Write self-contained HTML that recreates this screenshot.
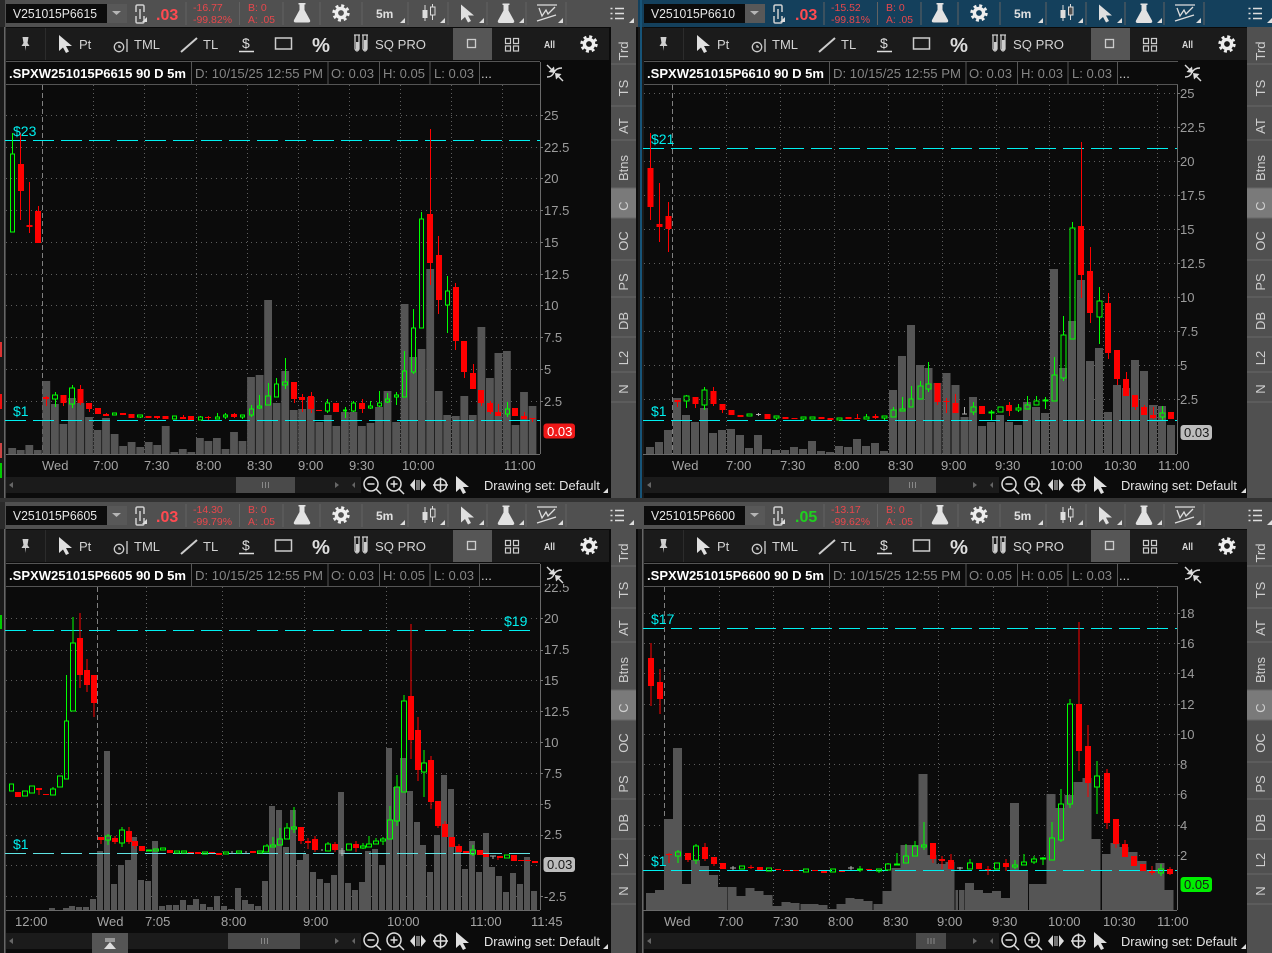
<!DOCTYPE html>
<html><head><meta charset="utf-8"><title>Charts</title>
<style>
html,body{margin:0;padding:0;background:#333;width:1272px;height:953px;overflow:hidden}
svg{display:block}
text{font-family:"Liberation Sans",Arial,sans-serif;font-size:13px}
.a{fill:#9c9c9c}
.t{fill:#a4a4a4}
.w{fill:#d2d2d2}
.h{fill:#858585}
.b{fill:#fff;font-weight:bold;font-size:12.5px}
.c{fill:#00eeee;font-size:14px}
.r{fill:#e8474c;font-size:10.5px}
.g{fill:#4fdc4f;font-size:10.5px}
.s{fill:#cfcfcf;text-anchor:middle}
.gx{stroke:#5e5e5e;stroke-width:1;stroke-dasharray:1 3;fill:none}
.gy{stroke:#5e5e5e;stroke-width:1;stroke-dasharray:1 4;fill:none}
.ds{stroke:#808080;stroke-width:1;stroke-dasharray:5 3;fill:none}
.cy{stroke:#00f0f0;stroke-width:1;stroke-dasharray:21 7;fill:none}
.ax{stroke:#6a6a6a;stroke-width:1;fill:none}
.ti{stroke:#777;stroke-width:1;fill:none}
.rw{stroke:#f00;stroke-width:1;fill:none}
.rb{stroke:#f00;stroke-width:6;fill:none}
.gw{stroke:#0f0;stroke-width:1;fill:none}
.gb{stroke:#0f0;stroke-width:1;fill:none}
.ww{stroke:#b0b0b0;stroke-width:1;fill:none}
.v{stroke:#555;fill:none}
</style></head><body>
<svg width="1272" height="953" viewBox="0 0 1272 953" xmlns="http://www.w3.org/2000/svg">
<defs>
<g id="gear"><circle r="4.6" fill="none" stroke="#eee" stroke-width="3.4"/><circle r="7.2" fill="none" stroke="#eee" stroke-width="3" stroke-dasharray="2.9 2.75"/></g>
<path id="flask" d="M-3.5 0h7v1.5h-1v5.500l5.500 10q1 2.500-2 2.500h-12q-3 0-2-2.500l5.500-10v-5.500h-1z" fill="#e2e2e2"/>
<path id="tri" d="M0 0h-5l5-5z" fill="#ddd"/>
<path id="cur" d="M0 0V16L4 12.500L7 18L10 16.500L7 11H13z" fill="#e0e0e0"/>
<g id="top">
<rect x="6" y="4" width="121" height="19" fill="#0c0c0c"/>
<rect x="107" y="4" width="20" height="19" fill="#585858"/>
<path d="M112 11h9l-4.500 4z" fill="#b5b5b5"/>
<path d="M136 12V6.500q0-1.500 1.500-1.500h5q1.500 0 1.500 1.500V12M136 16v5.500q0 1.500 1.500 1.500h5q1.500 0 1.500-1.500V16M140 9v10" fill="none" stroke="#cfcfcf" stroke-width="1.500"/>
<use href="#tri" x="147" y="22"/>
<path d="M186 2v23M239.500 2v23M283 2v23M320 2v23M362 2v23M408 2v23M448 2v23M487 2v23M526 2v23M566 2v23" stroke="#626262"/>
<use href="#flask" x="302" y="3"/>
<use href="#gear" x="341" y="13"/>
<use href="#tri" x="405" y="23"/>
<path d="M425 5v16M432.500 4v16" stroke="#ddd"/><rect x="422.500" y="10" width="5" height="8" fill="#ddd"/><rect x="430.500" y="7" width="4.500" height="8" fill="#505050" stroke="#ddd"/>
<use href="#tri" x="445" y="23"/>
<use href="#cur" x="461" y="4.500"/>
<use href="#tri" x="484" y="23"/>
<use href="#flask" x="506" y="3.500"/>
<use href="#tri" x="524" y="23"/>
<path d="M537 5h20M539 8l3 8 4-6 2 4 7-7M537 21l19-6" fill="none" stroke="#ddd" stroke-width="1.300"/>
<use href="#tri" x="563" y="23"/>
<path d="M615 8.500h9M615 13.500h9M615 18.500h9M610.500 8.500h2M610.500 13.500h2M610.500 18.500h2" stroke="#ddd" stroke-width="1.500"/>
<use href="#tri" x="634" y="23"/>
</g>
<g id="row">
<rect x="6" y="28" width="603" height="32" fill="#1b1b1b"/>
<rect x="453" y="28" width="39" height="32" fill="#565656"/>
<path d="M45.500 28v32" stroke="#2c2c2c"/>
<path d="M22.500 37h6l-1 6 2 3h-3.500l-.500 5-.500-5h-3.500l2-3z" fill="#cfcfcf"/>
<use href="#cur" x="59" y="35"/>
<circle cx="119" cy="47" r="4.700" fill="none" stroke="#ccc" stroke-width="1.300"/><path d="M119 45v2h2M127 39v13" fill="none" stroke="#ccc" stroke-width="1.300"/>
<path d="M181 52L197 38" stroke="#ccc" stroke-width="2"/>
<path d="M239 51.500h15" stroke="#ddd" stroke-width="1.500"/>
<rect x="275.500" y="38" width="16" height="11" fill="none" stroke="#ccc" stroke-width="1.500"/>
<path d="M354 35h6M362 35h6M355 35v14q2 4 4 0V35M363 35v14q2 4 4 0V35" fill="none" stroke="#ccc" stroke-width="1.300"/><rect x="356" y="42" width="2.500" height="8" fill="#ccc"/><rect x="364" y="40" width="2.500" height="10" fill="#ccc"/>
<rect x="467.500" y="39.500" width="8" height="8" fill="none" stroke="#ccc" stroke-width="1.300"/>
<path d="M505.500 38.500h5v5h-5zM513.500 38.500h5v5h-5zM505.500 46h5v5h-5zM513.500 46h5v5h-5z" fill="none" stroke="#ccc" stroke-width="1.200"/>
<use href="#gear" x="589" y="44"/>
</g>
<g id="hdr">
<path d="M6 61.500h534M6 84.500h534M191.500 62v22M328 62v22M379.500 62v22M430 62v22M479.500 62v22" stroke="#555"/>
<path d="M547 77q5 0 7-4.500t8-4.500" fill="none" stroke="#ddd" stroke-width="1.400"/>
<path d="M547 65l4.500 4.500" stroke="#ddd" stroke-width="1.400"/><path d="M555 73l-1-6.500-5.500 5.500z" fill="#ddd"/>
<path d="M563 81l-4.500-4.500" stroke="#ddd" stroke-width="1.400"/><path d="M555 73l1 6.500 5.500-5.500z" fill="#ddd"/>
</g>
<g id="side">
<rect x="611" y="27" width="25" height="424" fill="#505050"/>
<rect x="611" y="188" width="25" height="30" fill="#7a7a7a"/>
<path d="M611 64h25M611 106h25M611 140h25M611 188h25M611 218h25M611 260h25M611 297h25M611 337h25M611 372h25M611 402h25" stroke="#676767"/>
</g>
<g id="bot">
<rect x="6" y="477" width="355" height="16" fill="#1b1b1b"/>
<path d="M13 482v6l-4-3zM335 482v6l4-3zM355 482l-3 3 3 3z" fill="#666"/>
<g fill="none" stroke="#ddd" stroke-width="1.500"><circle cx="371" cy="484" r="7"/><path d="M376 489l5 5M367.500 484h7"/><circle cx="394" cy="484" r="7"/><path d="M399 489l5 5M390.500 484h7M394 480.500v7"/><circle cx="440.500" cy="485" r="6"/><path d="M433 485h15M440.500 477.500v15"/></g>
<path d="M415 479v12l-5-6zM421 479v12l5-6z" fill="#ddd"/><path d="M417 480v10M419 480v10" stroke="#ddd"/>
<use href="#cur" x="456" y="476"/>
<use href="#tri" x="608" y="493"/>
</g>
<path id="th" d="M-3 -3v6M0 -3v6M3 -3v6" stroke="#888" fill="none"/>
</defs>

<!-- TL panel -->
<rect x="0" y="0" width="638" height="498" fill="#0b0b0b"/>
<rect x="5" y="0" width="633" height="27" fill="#505050"/>
<rect x="0" y="0" width="5" height="27" fill="#2a2a2a"/>
<rect x="0" y="27" width="6" height="471" fill="#1a1a1a"/>
<rect x="4" y="27" width="1.500" height="471" fill="#666"/>
<rect x="0" y="342" width="2" height="15" fill="#d33"/><rect x="0" y="394" width="2" height="15" fill="#e11"/><rect x="0" y="443" width="2" height="15" fill="#c44"/><rect x="0" y="463" width="2" height="15" fill="#0c0"/>
<use href="#top"/><use href="#row"/><use href="#side"/><rect x="611" y="451" width="25" height="47" fill="#505050"/>
<path class="gy" d="M6 115.500H540M6 147.500H540M6 178.500H540M6 210.500H540M6 242.500H540M6 274.500H540M6 305.500H540M6 337.500H540M6 369.500H540M6 401.500H540"/>
<path class="gx" d="M93.500 85V454M144.500 85V454M196.500 85V454M247.500 85V454M298.500 85V454M349.500 85V454M400.500 85V454M451.500 85V454M502.500 85V454"/>
<path class="ds" d="M42.500 85V454"/>
<path class="v" stroke-width="7.800" d="M12.200 454V448M20.700 454V450M29.300 454V445M37.800 454V450M46.300 454V381M54.900 454V404M63.400 454V424M71.900 454V398M80.400 454V403M89 454V417M97.500 454V430M106 454V418M114.600 454V434M123.100 454V446M131.600 454V442M140.200 454V447M148.700 454V442M157.200 454V445M165.700 454V426M174.300 454V452M182.800 454V449M191.300 454V452M199.900 454V438M208.400 454V441M216.900 454V438M225.500 454V449M234 454V432M242.500 454V441M251 454V377M259.600 454V375M268.100 454V300M276.600 454V403M285.200 454V371M293.700 454V410M302.200 454V409M310.800 454V397M319.300 454V422M327.800 454V415M336.300 454V426M344.900 454V412M353.400 454V412M361.900 454V426M370.500 454V423M379 454V407M387.500 454V391M396.100 454V422M404.600 454V304M413.100 454V357M421.600 454V349M430.200 454V269M438.700 454V391M447.200 454V415M455.800 454V416M464.300 454V396M472.800 454V415M481.400 454V327M489.900 454V378M498.400 454V353M506.900 454V351M515.500 454V425M524 454V392M532.500 454V406"/>
<path class="cy" d="M5 140.500H540M5 420.500H540"/>
<g shape-rendering="crispEdges">
<path class="gw" d="M12.500 133V154M55.500 392V395M55.500 399V407M72.500 385V388M72.500 404V408M140.500 417V418M200.500 416V417M217.500 413V417M225.500 413V415M225.500 417V419M242.500 417V419M251.500 405V409M251.500 415V417M259.500 395V406M259.500 408V409M268.500 383V396M276.500 378V384M285.500 358V382M285.500 385V389M327.500 399V403M327.500 411V413M345.500 407V410M345.500 411V418M353.500 401V403M353.500 411V412M370.500 401V406M370.500 408V409M379.500 391V403M379.500 406V407M387.500 393V399M387.500 402V403M396.500 392V395M396.500 397V405M404.500 351V371M413.500 309V328M413.500 372V374M421.500 212V219M447.500 276V291M447.500 305V333M507.500 402V409M507.500 414V417"/>
<path class="gb" d="M10.500 154h4V232h-4zM52.500 395h5V399h-5zM69.500 388h5V404h-5zM112.500 413h4V415h-4zM137.500 415h5V417h-5zM172.500 416h4V419h-4zM198.500 417h4V420h-4zM215.500 417h4V419h-4zM223.500 415h4V417h-4zM240.500 415h4V417h-4zM249.500 409h4V415h-4zM257.500 406h4V408h-4zM265.500 396h5V405h-5zM274.500 384h4V397h-4zM282.500 382h5V385h-5zM325.500 403h4V411h-4zM343.500 410h3V411h-3zM351.500 403h4V411h-4zM368.500 406h4V408h-4zM377.500 403h4V406h-4zM385.500 399h4V402h-4zM394.500 395h4V397h-4zM402.500 371h4V397h-4zM411.500 328h4V372h-4zM419.500 219h4V328h-4zM445.500 291h4V305h-4zM505.500 409h4V414h-4z"/>
<path class="rw" d="M20.500 133V220M29.500 182V233M38.500 206V211M46.500 396V406M63.500 403V406M80.500 385V405M89.500 409V412M106.500 413V416M157.500 416V419M183.500 415V419M208.500 416V420M234.500 413V418M302.500 394V412M294.500 399V403M311.500 392V413M362.500 399V413M430.500 129V285M438.500 236V314M455.500 283V350M464.500 372V378M473.500 364V373M481.500 403V406M490.500 401V414M498.500 404V412M524.500 412V416M532.500 418V422"/>
<path class="rb" d="M21 164V191M29.500 225V227M38 211V243M46 397V399M63.500 395V403M80.500 389V403M89 403V409M98 408V414M106 414V416M123 413V415M131.500 414V418M148.500 416V418M157 416V418M165.500 416V419M183 417V419M191 416V420M208 417V418M234 414V417M294 382V399M302 397V400M311 396V409M319 410V411M336 403V412M362 403V409M430 214V263M439 255V300M456 287V341M464 341V372M473 373V389M481 390V403M490 403V412M498 412V416M515 408V416M524 416V419M532.500 418V419"/>
</g>
<path class="ax" d="M540.500 62V454M6 454.500H540"/>
<path class="ti" d="M540 115.500h3M540 147.500h3M540 178.500h3M540 210.500h3M540 242.500h3M540 274.500h3M540 305.500h3M540 337.500h3M540 369.500h3M540 401.500h3"/>
<rect x="6" y="62" width="534" height="22" fill="#0b0b0b"/><use href="#hdr"/>
<text class="c" x="13" y="136">$23</text><text class="c" x="13" y="416">$1</text>
<g class="a"><text x="544" y="120">25</text><text x="544" y="152">22.5</text><text x="544" y="183">20</text><text x="544" y="215">17.5</text><text x="544" y="247">15</text><text x="544" y="279">12.5</text><text x="544" y="310">10</text><text x="544" y="342">7.5</text><text x="544" y="374">5</text><text x="544" y="406">2.5</text></g>
<rect x="543.500" y="423.500" width="31.500" height="15" rx="3" fill="#f01818"/><text x="547" y="436" fill="#fff">0.03</text>
<g class="t"><text x="42" y="470">Wed</text><text x="93" y="470">7:00</text><text x="144" y="470">7:30</text><text x="196" y="470">8:00</text><text x="247" y="470">8:30</text><text x="298" y="470">9:00</text><text x="349" y="470">9:30</text><text x="402" y="470">10:00</text><text x="504" y="470">11:00</text></g>
<use href="#bot"/><rect x="236" y="477" width="59" height="16" fill="#4a4a4a"/><use href="#th" x="265.500" y="485"/>
<text x="484" y="490" fill="#e6e6e6" textLength="116" lengthAdjust="spacingAndGlyphs">Drawing set: Default</text>
<text x="13" y="18" fill="#e8e8e8" font-size="12" textLength="84" lengthAdjust="spacingAndGlyphs">V251015P6615</text>
<text x="156" y="20" fill="#ff4a50" style="font-size:16px;font-weight:bold">.03</text>
<text class="r" x="193" y="11">-16.77</text><text class="r" x="193" y="23" textLength="39" lengthAdjust="spacingAndGlyphs">-99.82%</text>
<text class="r" x="248" y="11">B: 0</text><text class="r" x="248" y="23" textLength="27" lengthAdjust="spacingAndGlyphs">A: .05</text>
<text x="376" y="18" fill="#e0e0e0" style="font-weight:bold;font-size:12px">5m</text>
<text class="w" x="79" y="49">Pt</text><text class="w" x="134" y="49">TML</text><text class="w" x="203" y="49">TL</text><text x="242" y="48" fill="#ddd" style="font-size:14px">$</text>
<text x="312" y="52" fill="#ddd" style="font-size:20px;font-weight:bold" textLength="18" lengthAdjust="spacingAndGlyphs">%</text>
<text class="w" x="375" y="49" textLength="51" lengthAdjust="spacingAndGlyphs">SQ PRO</text>
<text x="544" y="48" fill="#ddd" style="font-size:10px;font-weight:bold" textLength="11" lengthAdjust="spacingAndGlyphs">All</text>
<text class="b" x="9" y="78" textLength="177" lengthAdjust="spacingAndGlyphs">.SPXW251015P6615 90 D 5m</text>
<g class="h"><text x="195" y="78" textLength="128" lengthAdjust="spacingAndGlyphs">D: 10/15/25 12:55 PM</text><text x="331" y="78" textLength="43" lengthAdjust="spacingAndGlyphs">O: 0.03</text><text x="383" y="78" textLength="42" lengthAdjust="spacingAndGlyphs">H: 0.05</text><text x="434" y="78" textLength="40" lengthAdjust="spacingAndGlyphs">L: 0.03</text></g><text x="481" y="78" fill="#ccc">...</text>
<g class="s"><text transform="translate(628,51) rotate(-90)">Trd</text><text transform="translate(628,88) rotate(-90)">TS</text><text transform="translate(628,126) rotate(-90)">AT</text><text transform="translate(628,168) rotate(-90)">Btns</text><text transform="translate(628,206) rotate(-90)">C</text><text transform="translate(628,241) rotate(-90)">OC</text><text transform="translate(628,282) rotate(-90)">PS</text><text transform="translate(628,321) rotate(-90)">DB</text><text transform="translate(628,358) rotate(-90)">L2</text><text transform="translate(628,389) rotate(-90)">N</text></g>

<!-- TR panel -->
<rect x="638" y="0" width="634" height="498" fill="#0b0b0b"/>
<rect x="638" y="0" width="634" height="27" fill="#14405c"/>
<rect x="638" y="27" width="6" height="471" fill="#1a1a1a"/>
<rect x="640" y="0" width="2" height="498" fill="#175478"/>
<g transform="translate(638,0)"><use href="#top"/><use href="#row"/></g>
<g transform="translate(636,0)"><use href="#side"/></g><rect x="1247" y="451" width="25" height="47" fill="#505050"/>
<path class="gy" d="M644 93.500H1177M644 127.500H1177M644 161.500H1177M644 195.500H1177M644 229.500H1177M644 263.500H1177M644 297.500H1177M644 331.500H1177M644 365.500H1177M644 399.500H1177"/>
<path class="gx" d="M726.500 85V454M780.500 85V454M834.500 85V454M888.500 85V454M942.500 85V454M996.500 85V454M1049.500 85V454M1103.500 85V454M1157.500 85V454"/>
<path class="ds" d="M672.500 85V454"/>
<path class="v" stroke-width="8" d="M650 454V447M659 454V442M668 454V430M677 454V398M686 454V415M695 454V422M704 454V408M713 454V433M722 454V430M731 454V429M740 454V435M749 454V448M758 454V435M767 454V449M776 454V450M785 454V450M794 454V447M803 454V449M812 454V441M821 454V451M830 454V452M839 454V446M848 454V447M857 454V439M866 454V446M875 454V443M884 454V451M893 454V390M902 454V356M911 454V325M920 454V365M928.500 454V368M937.500 454V383M946.500 454V373M955.500 454V385M964.500 454V417M973 454V397M982 454V426M991 454V422M1000 454V415M1009 454V422M1018 454V425M1027 454V402M1036 454V407M1045 454V413M1054 454V269M1063 454V368M1072 454V321M1081 454V280M1090 454V361M1099 454V348M1108 454V412M1117 454V385M1126 454V388M1135 454V360M1144 454V371M1153 454V405M1162 454V406M1171 454V425"/>
<path class="cy" d="M643 148.500H1177M643 420.500H1177"/>
<g shape-rendering="crispEdges">
<path class="gw" d="M686.500 395V396M686.500 401V408M704.500 387V390M704.500 405V410M776.500 418V420M803.500 419V420M866.500 414V417M884.500 418V420M893.500 407V410M902.500 397V409M911.500 386V399M920.500 381V386M928.500 362V384M928.500 389V392M973.500 402V407M973.500 412V415M991.500 410V412M991.500 413V420M1018.500 404V408M1018.500 410V412M1027.500 396V405M1036.500 396V401M1045.500 397V409M1054.500 357V375M1063.500 316V335M1063.500 378V381M1072.500 222V228M1099.500 287V301M1099.500 317V344M1162.500 406V413M1162.500 417V420"/>
<path class="gb" d="M684 396h5V401h-5zM702 390h5V405h-5zM747 414h5V416h-5zM774 416h5V418h-5zM801 417h5V419h-5zM810 417h5V419h-5zM837 418h5V420h-5zM864 417h5V419h-5zM882 416h5V418h-5zM891 410h5V417h-5zM900 409h5V411h-5zM909 399h4V407h-4zM918 386h5V399h-5zM926 384h5V389h-5zM971 407h5V412h-5zM989 412h5V413h-5zM998 407h5V412h-5zM1016 408h5V410h-5zM1025 405h5V409h-5zM1034 401h5V405h-5zM1043 400h5V401h-5zM1052 375h5V401h-5zM1061 335h5V378h-5zM1070 228h5V339h-5zM1097 301h5V317h-5zM1160 413h5V417h-5z"/>
<path class="rw" d="M650.500 133V220M659.500 183V242M668.500 202V252M677.500 402V407M695.500 404V408M713.500 387V406M722.500 410V413M857.500 414V419M875.500 414V419M937.500 402V405M946.500 398V413M955.500 394V413M1009.500 402V416M1081.500 142V298M1090.500 247V323M1108.500 293V359M1117.500 379V385M1126.500 372V379M1135.500 407V410M1144.500 405V407M1153.500 407V419"/>
<path class="rb" d="M650.500 168V207M659.500 224V227M668.500 216V229M677.500 400V402M695.500 397V404M713.500 391V404M722.500 404V410M731.500 410V415M740.500 415V417M767.500 414V419M785.500 417V419M794.500 418V419M821.500 417V419M830.500 418V420M848.500 417V419M857.500 418V419M875.500 416V418M937.500 383V402M946.500 401V402M955.500 403V413M982 406V414M1009 405V411M1081 226V275M1090 271V313M1108 303V353M1117 350V379M1126 379V396M1135 395V407M1144 407V415M1153 415V418M1171 412V419"/>
<path class="ww" d="M964.500 407V414M962 414h5M756 414.500h5M758.500 413V416"/>
</g>
<path class="ax" d="M1177.500 62V454M643 454.500H1177"/>
<path class="ti" d="M1177 93.500h3M1177 127.500h3M1177 161.500h3M1177 195.500h3M1177 229.500h3M1177 263.500h3M1177 297.500h3M1177 331.500h3M1177 365.500h3M1177 399.500h3"/>
<rect x="644" y="62" width="534" height="22" fill="#0b0b0b"/><g transform="translate(638,0)"><use href="#hdr"/></g>
<text class="c" x="651" y="144">$21</text><text class="c" x="651" y="416">$1</text>
<g class="a"><text x="1180" y="98">25</text><text x="1180" y="132">22.5</text><text x="1180" y="166">20</text><text x="1180" y="200">17.5</text><text x="1180" y="234">15</text><text x="1180" y="268">12.5</text><text x="1180" y="302">10</text><text x="1180" y="336">7.5</text><text x="1180" y="370">5</text><text x="1180" y="404">2.5</text></g>
<rect x="1180.500" y="425" width="31.500" height="15" rx="3" fill="#bdbdbd"/><text x="1184" y="437" fill="#1a1a1a">0.03</text>
<g class="t"><text x="672" y="470">Wed</text><text x="726" y="470">7:00</text><text x="780" y="470">7:30</text><text x="834" y="470">8:00</text><text x="888" y="470">8:30</text><text x="941" y="470">9:00</text><text x="995" y="470">9:30</text><text x="1050" y="470">10:00</text><text x="1104" y="470">10:30</text><text x="1158" y="470">11:00</text></g>
<g transform="translate(638,0)"><use href="#bot"/><rect x="251" y="477" width="47" height="16" fill="#4a4a4a"/><use href="#th" x="274.500" y="485"/></g>
<text x="1121" y="490" fill="#e6e6e6" textLength="116" lengthAdjust="spacingAndGlyphs">Drawing set: Default</text>
<text x="651" y="18" fill="#e8e8e8" font-size="12" textLength="84" lengthAdjust="spacingAndGlyphs">V251015P6610</text>
<text x="795" y="20" fill="#ff4a50" style="font-size:16px;font-weight:bold">.03</text>
<text class="r" x="831" y="11">-15.52</text><text class="r" x="831" y="23" textLength="39" lengthAdjust="spacingAndGlyphs">-99.81%</text>
<text class="r" x="886" y="11">B: 0</text><text class="r" x="886" y="23" textLength="27" lengthAdjust="spacingAndGlyphs">A: .05</text>
<text x="1014" y="18" fill="#e0e0e0" style="font-weight:bold;font-size:12px">5m</text>
<text class="w" x="717" y="49">Pt</text><text class="w" x="772" y="49">TML</text><text class="w" x="841" y="49">TL</text><text x="880" y="48" fill="#ddd" style="font-size:14px">$</text>
<text x="950" y="52" fill="#ddd" style="font-size:20px;font-weight:bold" textLength="18" lengthAdjust="spacingAndGlyphs">%</text>
<text class="w" x="1013" y="49" textLength="51" lengthAdjust="spacingAndGlyphs">SQ PRO</text>
<text x="1182" y="48" fill="#ddd" style="font-size:10px;font-weight:bold" textLength="11" lengthAdjust="spacingAndGlyphs">All</text>
<text class="b" x="647" y="78" textLength="177" lengthAdjust="spacingAndGlyphs">.SPXW251015P6610 90 D 5m</text>
<g class="h"><text x="833" y="78" textLength="128" lengthAdjust="spacingAndGlyphs">D: 10/15/25 12:55 PM</text><text x="969" y="78" textLength="43" lengthAdjust="spacingAndGlyphs">O: 0.03</text><text x="1021" y="78" textLength="42" lengthAdjust="spacingAndGlyphs">H: 0.03</text><text x="1072" y="78" textLength="40" lengthAdjust="spacingAndGlyphs">L: 0.03</text></g><text x="1119" y="78" fill="#ccc">...</text>
<g class="s"><text transform="translate(1265,51) rotate(-90)">Trd</text><text transform="translate(1265,88) rotate(-90)">TS</text><text transform="translate(1265,126) rotate(-90)">AT</text><text transform="translate(1265,168) rotate(-90)">Btns</text><text transform="translate(1265,206) rotate(-90)">C</text><text transform="translate(1265,241) rotate(-90)">OC</text><text transform="translate(1265,282) rotate(-90)">PS</text><text transform="translate(1265,321) rotate(-90)">DB</text><text transform="translate(1265,358) rotate(-90)">L2</text><text transform="translate(1265,389) rotate(-90)">N</text></g>

<!-- BL panel -->
<rect x="0" y="502" width="638" height="451" fill="#0b0b0b"/>
<rect x="5" y="502" width="633" height="27" fill="#505050"/>
<rect x="0" y="502" width="5" height="27" fill="#2a2a2a"/>
<rect x="0" y="529" width="6" height="424" fill="#1a1a1a"/>
<rect x="4" y="529" width="1.500" height="424" fill="#666"/>
<rect x="0" y="615" width="2" height="14" fill="#0c0"/>
<g transform="translate(0,502)"><use href="#top"/><use href="#row"/><use href="#side"/></g>
<path class="gy" d="M6 618.500H540M6 650.500H540M6 680.500H540M6 711.500H540M6 742.500H540M6 773.500H540M6 804.500H540M6 835.500H540M6 865.500H540M6 896.500H540"/>
<path class="gx" d="M146.500 587V910M222.500 587V910M304.500 587V910M386.500 587V910M469.500 587V910"/>
<path class="ds" d="M97.500 587V910"/>
<path class="v" stroke-width="6" d="M52 910V908M66 910V908M72 910V906M79 910V907M86 910V907M93 910V899M100 910V851M107 910V751M114 910V884M121 910V865M128 910V860M134 910V837M141 910V880M148 910V881M155 910V841M162 910V906M169 910V905M176 910V905M183 910V900M190 910V905M196 910V899M203 910V904M210 910V907M217 910V896M224 910V906M231 910V909M238 910V888M245 910V900M251 910V904M258 910V906M265 910V881M272 910V806M279 910V810M286 910V847M293 910V810M300 910V860M306 910V854M313 910V872M320 910V879M327 910V883M334 910V875M341 910V792M348 910V883M355 910V890M362 910V882M368 910V851M375 910V849M382 910V865M389 910V748M396 910V787M403 910V758M410 910V791M417 910V822M423 910V845M430 910V872M437 910V835M444 910V775M451 910V789M458 910V846M465 910V869M472 910V841M479 910V872M486 910V833M492 910V867M499 910V876M506 910V892M513 910V873M520 910V884M527 910V857M534 910V891"/>
<path class="cy" d="M5 630.500H534"/>
<path class="cy" style="stroke:#5fe4e4" d="M5 853.500H534"/>
<g shape-rendering="crispEdges">
<path class="gw" d="M53 787V789M66.500 675V721M73 617V643M108 834V836M108 840V845M122 827V830M122 843V847M267 844V846M273 837V845M280 828V839M287 823V828M294 807V827M294 829V833M328 842V844M363 843V846M363 848V849M369 836V844M376 838V841M383 837V839M383 841V845M390 806V820M397 775V787M397 821V826M404 695V701M424 750V763M424 772V797M473 845V850M473 854V856"/>
<path class="gb" d="M9.500 784h4V791h-4zM22.500 791h5V796h-5zM29.500 786h5V793h-5zM50.500 789h5V795h-5zM57.500 776h5V787h-5zM64.500 721h4V779h-4zM70.500 643h5V711h-5zM105.500 836h5V840h-5zM119.500 830h5V843h-5zM146.500 850h5V851h-5zM153.500 849h5V851h-5zM160.500 848h5V850h-5zM174.500 851h5V853h-5zM181.500 851h5V853h-5zM202.500 852h5V854h-5zM223.500 852h5V854h-5zM236.500 851h5V853h-5zM257.500 851h5V853h-5zM263.500 846h5V852h-5zM270.500 845h5V847h-5zM277.500 839h5V845h-5zM284.500 828h5V839h-5zM291.500 827h5V829h-5zM325.500 844h5V851h-5zM346.500 844h5V850h-5zM360.500 846h5V848h-5zM366.500 844h5V847h-5zM373.500 841h5V844h-5zM380.500 839h5V841h-5zM387.500 820h5V839h-5zM394.500 787h5V821h-5zM401.500 701h5V792h-5zM421.500 763h5V772h-5zM470.500 850h5V854h-5zM504.500 855h5V858h-5z"/>
<path class="rw" d="M39 790V795M101 840V844M115 836V844M129 827V844M135 846V849M80 613V688M87 659V692M94 703V717M301 841V844M308 838V849M315 836V852M335 842V852M356 841V852M411 624V759M418 717V781M431 756V809M438 826V828M445 821V824M459 844V846M498 857V860"/>
<path class="rb" d="M18 792V797M39 788V790M46 794V795M80 638V675M87 670V685M94 675V703M101 837V840M115 838V842M129 831V842M135 841V846M142 846V851M170 850V853M191 852V853M198 852V854M212 852V853M219 853V855M253 851V853M301 827V841M308 841V843M315 839V850M335 844V850M356 844V848M411 696V740M418 730V770M431 760V802M438 801V826M445 824V837M452 837V847M459 846V852M466 851V853M480 850V855M486 854V857M500 856V858M514 855V861M521 860V861M528 860V861M535 861V863"/>
<path class="ww" d="M232 851V854M246 851V854M322 849V851M342 848V856M339 851h6M339 853h6M493 856V859M490 856h6"/>
</g>
<path class="ax" d="M540.500 564V910M6 910.500H540"/>
<path class="ti" d="M540 618.500h3M540 650.500h3M540 680.500h3M540 711.500h3M540 742.500h3M540 773.500h3M540 804.500h3M540 835.500h3M540 896.500h3"/>
<text class="a" x="544" y="592">22.5</text>
<rect x="541" y="564" width="69" height="20" fill="#0b0b0b"/>
<rect x="6" y="564" width="534" height="22" fill="#0b0b0b"/><g transform="translate(0,502)"><use href="#hdr"/></g>
<text class="c" x="504" y="626">$19</text><text class="c" x="13" y="849">$1</text>
<g class="a"><text x="544" y="623">20</text><text x="544" y="654">17.5</text><text x="544" y="685">15</text><text x="544" y="716">12.5</text><text x="544" y="747">10</text><text x="544" y="778">7.5</text><text x="544" y="809">5</text><text x="544" y="839">2.5</text><text x="544" y="901">-2.5</text></g>
<rect x="543.500" y="857" width="31.500" height="15" rx="3" fill="#bdbdbd"/><text x="547" y="869" fill="#1a1a1a">0.03</text>
<g class="t"><text x="15" y="926">12:00</text><text x="97" y="926">Wed</text><text x="145" y="926">7:05</text><text x="221" y="926">8:00</text><text x="303" y="926">9:00</text><text x="387" y="926">10:00</text><text x="470" y="926">11:00</text><text x="531" y="926">11:45</text></g>
<g transform="translate(0,456)"><use href="#bot"/><rect x="228" y="477" width="72" height="16" fill="#4a4a4a"/><use href="#th" x="264.500" y="485"/></g>
<rect x="92" y="933" width="36" height="20" fill="#555"/><path d="M105 939h10M105 941h10" stroke="#ddd"/><path d="M110 942l6 7h-12z" fill="#ddd"/>
<text x="484" y="946" fill="#e6e6e6" textLength="116" lengthAdjust="spacingAndGlyphs">Drawing set: Default</text>
<text x="13" y="520" fill="#e8e8e8" font-size="12" textLength="84" lengthAdjust="spacingAndGlyphs">V251015P6605</text>
<text x="156" y="522" fill="#ff4a50" style="font-size:16px;font-weight:bold">.03</text>
<text class="r" x="193" y="513">-14.30</text><text class="r" x="193" y="525" textLength="39" lengthAdjust="spacingAndGlyphs">-99.79%</text>
<text class="r" x="248" y="513">B: 0</text><text class="r" x="248" y="525" textLength="27" lengthAdjust="spacingAndGlyphs">A: .05</text>
<text x="376" y="520" fill="#e0e0e0" style="font-weight:bold;font-size:12px">5m</text>
<text class="w" x="79" y="551">Pt</text><text class="w" x="134" y="551">TML</text><text class="w" x="203" y="551">TL</text><text x="242" y="550" fill="#ddd" style="font-size:14px">$</text>
<text x="312" y="554" fill="#ddd" style="font-size:20px;font-weight:bold" textLength="18" lengthAdjust="spacingAndGlyphs">%</text>
<text class="w" x="375" y="551" textLength="51" lengthAdjust="spacingAndGlyphs">SQ PRO</text>
<text x="544" y="550" fill="#ddd" style="font-size:10px;font-weight:bold" textLength="11" lengthAdjust="spacingAndGlyphs">All</text>
<text class="b" x="9" y="580" textLength="177" lengthAdjust="spacingAndGlyphs">.SPXW251015P6605 90 D 5m</text>
<g class="h"><text x="195" y="580" textLength="128" lengthAdjust="spacingAndGlyphs">D: 10/15/25 12:55 PM</text><text x="331" y="580" textLength="43" lengthAdjust="spacingAndGlyphs">O: 0.03</text><text x="383" y="580" textLength="42" lengthAdjust="spacingAndGlyphs">H: 0.05</text><text x="434" y="580" textLength="40" lengthAdjust="spacingAndGlyphs">L: 0.03</text></g><text x="481" y="580" fill="#ccc">...</text>
<g class="s"><text transform="translate(628,553) rotate(-90)">Trd</text><text transform="translate(628,590) rotate(-90)">TS</text><text transform="translate(628,628) rotate(-90)">AT</text><text transform="translate(628,670) rotate(-90)">Btns</text><text transform="translate(628,708) rotate(-90)">C</text><text transform="translate(628,743) rotate(-90)">OC</text><text transform="translate(628,784) rotate(-90)">PS</text><text transform="translate(628,823) rotate(-90)">DB</text><text transform="translate(628,860) rotate(-90)">L2</text><text transform="translate(628,891) rotate(-90)">N</text></g>

<!-- BR panel -->
<rect x="638" y="502" width="634" height="451" fill="#0b0b0b"/>
<rect x="638" y="502" width="634" height="27" fill="#505050"/>
<rect x="638" y="529" width="6" height="424" fill="#1a1a1a"/>
<rect x="642" y="529" width="1.500" height="424" fill="#666"/>
<g transform="translate(638,502)"><use href="#top"/><use href="#row"/></g>
<g transform="translate(636,502)"><use href="#side"/></g>
<path class="gy" d="M644 613.500H1177M644 643.500H1177M644 673.500H1177M644 704.500H1177M644 734.500H1177M644 764.500H1177M644 794.500H1177M644 825.500H1177M644 855.500H1177"/>
<path class="gx" d="M719.500 587V910M773.500 587V910M829.500 587V910M883.500 587V910M938.500 587V910M993.500 587V910M1047.500 587V910M1102.500 587V910M1157.500 587V910"/>
<path class="ds" d="M664.500 587V910"/>
<path class="v" stroke-width="9" d="M650.500 910V893M659.500 910V890M668.500 910V819M677.500 910V748M686.500 910V884M695.500 910V860M704.500 910V866M713.500 910V875M722.500 910V887M732 910V887M741 910V896M750 910V888M759 910V891M768 910V895M777 910V906M786 910V902M795 910V903M805 910V904M814 910V904M823 910V905M832 910V909M841 910V904M850 910V898M859 910V899M868 910V901M878 910V904M887 910V891M896 910V868M905 910V845M914 910V845M923 910V774M932 910V855M941 910V864M950 910V862M960 910V890M969.500 910V883M978.500 910V890M987.500 910V893M996.500 910V891M1005.500 910V898M1014.500 910V803M1023.500 910V870M1033 910V884M1042 910V884M1051 910V794M1060 910V808M1069 910V795M1078 910V782M1087 910V778M1096 910V839M1106 910V854M1115 910V843M1124 910V847M1133 910V852M1142 910V861M1151 910V870M1160 910V863M1169 910V890"/>
<path d="M1028.500 845V910M1101.500 845V910M958.500 880V910" stroke="#0b0b0b"/>
<path class="cy" d="M643 628.500H1177M643 870.500H1177"/>
<g shape-rendering="crispEdges">
<path class="gw" d="M678 850V852M678 856V863M696 844V846M696 860V864M860 866V872M879 871V873M888 863V864M897 853V864M906 844V856M915 841V846M924 822V845M924 847V850M970 859V863M1015 860V865M1015 867V869M1024 854V862M1034 856V859M1034 862V864M1043 857V858M1043 859V865M1052 822V838M1061 789V804M1061 840V842M1070 699V704M1070 804V808M1097 761V776M1097 787V814M1161 864V869M1161 873V876"/>
<path class="gb" d="M675.500 852h5V856h-5zM693.500 846h5V860h-5zM739.500 866h5V869h-5zM766.500 868h5V871h-5zM803.500 869h5V872h-5zM830.500 869h5V872h-5zM857.500 869h5V870h-5zM876.500 869h5V871h-5zM885.500 864h5V870h-5zM894.500 864h5V865h-5zM903.500 856h5V863h-5zM912.500 846h5V856h-5zM921.500 845h5V847h-5zM967.500 863h5V869h-5zM994.500 863h5V869h-5zM1012.500 865h5V867h-5zM1021.500 862h5V865h-5zM1031.500 859h5V862h-5zM1040.500 858h5V859h-5zM1049.500 838h5V860h-5zM1058.500 804h5V840h-5zM1067.500 704h5V804h-5zM1094.500 776h5V787h-5zM1158.500 869h5V873h-5z"/>
<path class="rw" d="M651 643V706M660 669V714M669 853V863M688 860V862M705 843V861M714 864V866M751 865V869M933 859V863M942 856V869M951 854V860M988 866V875M1006 859V871M1079 622V771M1088 725V797M1107 769V829M1116 844V848M1125 840V844M1152 866V875M1170 867V875"/>
<path class="rb" d="M651 658V686M660 682V699M669 854V855M688 853V860M705 847V859M714 857V864M723 863V869M751 867V868M760 867V870M778 869V870M787 870V871M796 870V871M815 870V871M824 871V873M842 871V872M869 869V870M933 843V859M942 859V861M951 860V869M979 863V869M988 869V870M1006 863V867M1079 704V751M1088 746V783M1107 773V823M1116 819V844M1125 844V857M1134 856V866M1143 864V871M1152 871V873M1170 869V874"/>
<path class="ww" d="M733 866V870M730 868h6M851 866V870M848 868h6M960 867V870M957 868h6"/>
</g>
<path class="ax" d="M1177.500 564V910M643 910.500H1177"/>
<path class="ti" d="M1177 613.500h3M1177 643.500h3M1177 673.500h3M1177 704.500h3M1177 734.500h3M1177 764.500h3M1177 794.500h3M1177 825.500h3M1177 855.500h3"/>
<rect x="644" y="564" width="534" height="22" fill="#0b0b0b"/><g transform="translate(638,502)"><use href="#hdr"/></g>
<text class="c" x="651" y="624">$17</text><text class="c" x="651" y="866">$1</text>
<g class="a"><text x="1180" y="618">18</text><text x="1180" y="648">16</text><text x="1180" y="678">14</text><text x="1180" y="709">12</text><text x="1180" y="739">10</text><text x="1180" y="769">8</text><text x="1180" y="799">6</text><text x="1180" y="830">4</text><text x="1180" y="860">2</text></g>
<rect x="1180.500" y="877" width="31.500" height="15" rx="3" fill="#00ee00"/><text x="1184" y="889" fill="#1a1a1a">0.05</text>
<g class="t"><text x="664" y="926">Wed</text><text x="718" y="926">7:00</text><text x="773" y="926">7:30</text><text x="828" y="926">8:00</text><text x="883" y="926">8:30</text><text x="937" y="926">9:00</text><text x="992" y="926">9:30</text><text x="1048" y="926">10:00</text><text x="1103" y="926">10:30</text><text x="1157" y="926">11:00</text></g>
<g transform="translate(638,456)"><use href="#bot"/><rect x="278" y="477" width="30" height="16" fill="#4a4a4a"/><use href="#th" x="293" y="485"/></g>
<text x="1121" y="946" fill="#e6e6e6" textLength="116" lengthAdjust="spacingAndGlyphs">Drawing set: Default</text>
<text x="651" y="520" fill="#e8e8e8" font-size="12" textLength="84" lengthAdjust="spacingAndGlyphs">V251015P6600</text>
<text x="795" y="522" fill="#1fd01f" style="font-size:16px;font-weight:bold">.05</text>
<text class="r" x="831" y="513">-13.17</text><text class="r" x="831" y="525" textLength="39" lengthAdjust="spacingAndGlyphs">-99.62%</text>
<text class="r" x="886" y="513">B: 0</text><text class="r" x="886" y="525" textLength="27" lengthAdjust="spacingAndGlyphs">A: .05</text>
<text x="1014" y="520" fill="#e0e0e0" style="font-weight:bold;font-size:12px">5m</text>
<text class="w" x="717" y="551">Pt</text><text class="w" x="772" y="551">TML</text><text class="w" x="841" y="551">TL</text><text x="880" y="550" fill="#ddd" style="font-size:14px">$</text>
<text x="950" y="554" fill="#ddd" style="font-size:20px;font-weight:bold" textLength="18" lengthAdjust="spacingAndGlyphs">%</text>
<text class="w" x="1013" y="551" textLength="51" lengthAdjust="spacingAndGlyphs">SQ PRO</text>
<text x="1182" y="550" fill="#ddd" style="font-size:10px;font-weight:bold" textLength="11" lengthAdjust="spacingAndGlyphs">All</text>
<text class="b" x="647" y="580" textLength="177" lengthAdjust="spacingAndGlyphs">.SPXW251015P6600 90 D 5m</text>
<g class="h"><text x="833" y="580" textLength="128" lengthAdjust="spacingAndGlyphs">D: 10/15/25 12:55 PM</text><text x="969" y="580" textLength="43" lengthAdjust="spacingAndGlyphs">O: 0.05</text><text x="1021" y="580" textLength="42" lengthAdjust="spacingAndGlyphs">H: 0.05</text><text x="1072" y="580" textLength="40" lengthAdjust="spacingAndGlyphs">L: 0.03</text></g><text x="1119" y="580" fill="#ccc">...</text>
<g class="s"><text transform="translate(1265,553) rotate(-90)">Trd</text><text transform="translate(1265,590) rotate(-90)">TS</text><text transform="translate(1265,628) rotate(-90)">AT</text><text transform="translate(1265,670) rotate(-90)">Btns</text><text transform="translate(1265,708) rotate(-90)">C</text><text transform="translate(1265,743) rotate(-90)">OC</text><text transform="translate(1265,784) rotate(-90)">PS</text><text transform="translate(1265,823) rotate(-90)">DB</text><text transform="translate(1265,860) rotate(-90)">L2</text><text transform="translate(1265,891) rotate(-90)">N</text></g>
</svg>
</body></html>
